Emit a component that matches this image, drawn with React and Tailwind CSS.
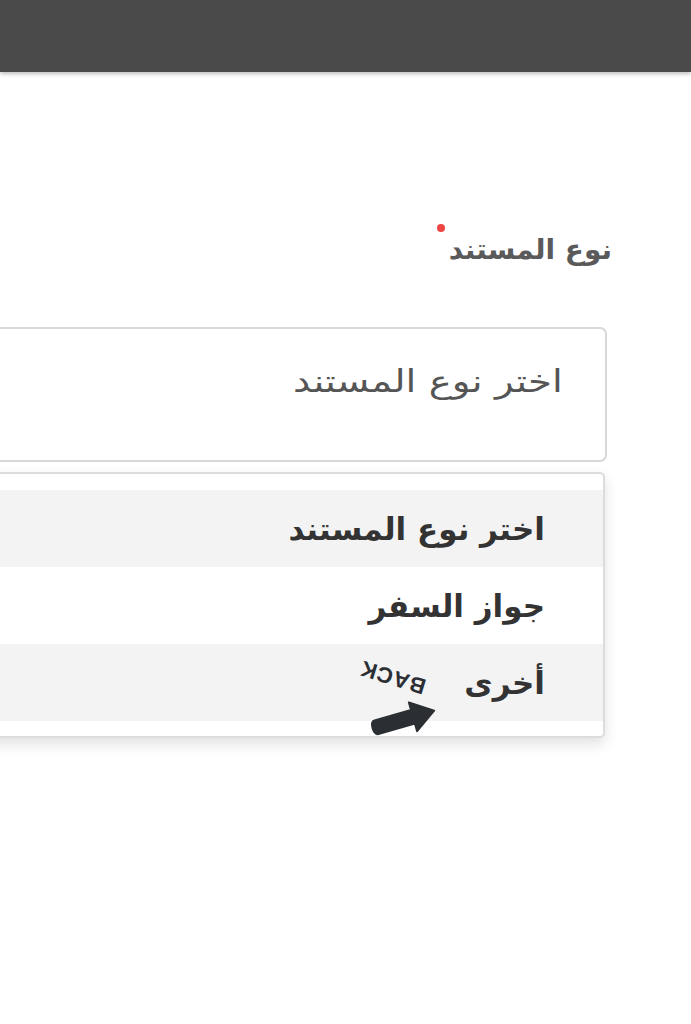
import React from 'react';

const options = [
  { label: 'اختر نوع المستند', shaded: true },
  { label: 'جواز السفر', shaded: false },
  { label: 'أخرى', shaded: true },
];

const BackSticker = () => (
  <div className="absolute right-[158px] top-[8px] w-[90px] h-[85px] pointer-events-none">
    <span
      className="absolute left-[4px] top-[14px] text-[22px] font-bold text-[#2b2f33] tracking-[1px] leading-none"
      style={{ fontFamily: '"Liberation Sans", Arial, sans-serif', transform: 'rotate(197deg)' }}
    >
      BACK
    </span>
    <svg className="absolute left-[14px] top-[46px]" width="72" height="40" viewBox="0 0 72 40">
      <g transform="rotate(-16 36 20)">
        <path
          d="M6 14 L44 14 L44 6 L66 21 L44 36 L44 28 L6 28 Q2 28 2 21 Q2 14 6 14 Z"
          fill="#2b2f33"
          stroke="#2b2f33"
          strokeWidth="2"
          strokeLinejoin="round"
        />
      </g>
    </svg>
  </div>
);

export default function App() {
  return (
    <div
      className="w-[691px] h-[1024px] bg-white overflow-hidden"
      style={{ fontFamily: '"DejaVu Sans", "Noto Sans", sans-serif' }}
    >
      <div className="h-[72px] bg-[#4a4a4a] shadow-[0_2px_4px_rgba(0,0,0,0.25)]" />

      <div dir="rtl" className="pt-[158px] mr-[79px] -ml-6">
        <label className="flex items-start gap-1 text-[28px] font-bold text-[#5a5a5a] leading-[40px]">
          <span>نوع المستند</span>
          <span className="w-[8px] h-[8px] rounded-full bg-[#ee4444] mt-[-6px]" />
        </label>

        <div className="mt-[57px] mr-[5px] h-[135px] rounded-[7px] border-2 border-[#d8d8d8] bg-white pr-[42px] pt-[32px]">
          <span className="inline-block origin-right scale-x-[1.25] text-[31px] text-[#555] leading-[40px]">
            اختر نوع المستند
          </span>
        </div>

        <div className="mt-[10px] mr-[7px] rounded-[5px] border-2 border-[#dcdcdc] bg-white pt-[16px] pb-[15px] shadow-[0_6px_14px_rgba(0,0,0,0.12)]">
          {options.map((opt, i) => (
            <div
              key={opt.label}
              className={`relative h-[77px] flex items-center pr-[58px] ${opt.shaded ? 'bg-[#f3f3f3]' : 'bg-white'}`}
            >
              <span className="text-[31px] font-bold text-[#333] leading-[40px]">{opt.label}</span>
              {i === 2 && <BackSticker />}
            </div>
          ))}
        </div>
      </div>
    </div>
  );
}
